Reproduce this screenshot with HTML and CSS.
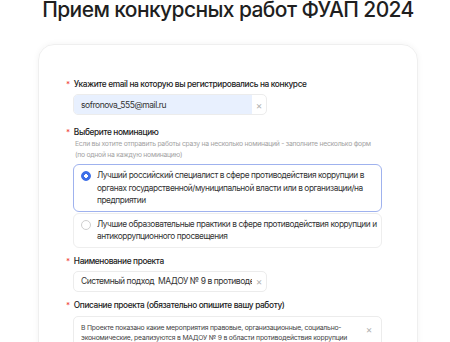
FILE: index.html
```html
<!DOCTYPE html>
<html lang="ru">
<head>
  <meta charset="UTF-8">
  <title>Прием конкурсных работ ФУАП 2024</title>
  <meta name="viewport" content="width=device-width, initial-scale=1.0" />
  <link rel="stylesheet" href="styles.css">
</head>
<body>

  <div class="page">
    <h1>Прием конкурсных работ ФУАП 2024</h1>

    <form class="form-card">

      <div class="field">
        <label class="label"><span class="req">*</span>Укажите email на которую вы регистрировались на конкурсе</label>
        <div class="input short">
          <span class="value autofill">sofronova_555@mail.ru</span>
          <span class="clear">&times;</span>
        </div>
      </div>

      <div class="field nominations">
        <label class="label"><span class="req">*</span>Выберите номинацию</label>
        <div class="hint">Если вы хотите отправить работы сразу на несколько номинаций - заполните несколько форм (по одной на каждую номинацию)</div>
        <div class="options">
          <div class="option checked">
            <span class="radio"></span>
            <span class="option-text">Лучший российский специалист в сфере противодействия коррупции в органах государственной/муниципальной власти или в организации/на предприятии</span>
          </div>
          <div class="option">
            <span class="radio"></span>
            <span class="option-text">Лучшие образовательные практики в сфере противодействия коррупции и антикоррупционного просвещения</span>
          </div>
        </div>
      </div>

      <div class="field tight">
        <label class="label"><span class="req">*</span>Наименование проекта</label>
        <div class="input short">
          <span class="value">Системный подход  МАДОУ № 9 в противоде</span>
          <span class="clear">&times;</span>
        </div>
      </div>

      <div class="field">
        <label class="label"><span class="req">*</span>Описание проекта (обязательно опишите вашу работу)</label>
        <div class="textarea">
          <span class="area-text">В Проекте показано какие мероприятия правовые, организационные, социально-экономические, реализуются в МАДОУ № 9 в области противодействия коррупции</span>
          <span class="clear">&times;</span>
        </div>
      </div>

    </form>
  </div>

</body>
</html>
```

FILE: styles.css
```css
body {
  margin: 0;
  background: #fff;
  color: #222;
  font-family: Inter, "Noto Sans", sans-serif;
}
.page {
  width: 380px;
  margin-left: 38px;
}
h1 {
  margin: 0;
  font-size: 21px;
  line-height: 20px;
  font-weight: 500;
  letter-spacing: -0.6px;
  text-align: center;
  color: #1f1f1f;
  white-space: nowrap;
}
.form-card {
  margin-top: 24px;
  border: 1px solid #efefef;
  border-radius: 16px;
  box-shadow: 0 0 6px rgba(0, 0, 0, 0.05);
  padding: 33px 35px 40px 34px;
  height: 400px;
}
.field {
  margin-bottom: 11px;
}
.field.nominations {
  margin-bottom: 7px;
}
.field.tight {
  margin-bottom: 7px;
}
.label {
  display: block;
  padding-left: 2px;
  font-size: 8.3px;
  line-height: 12px;
  font-weight: 500;
  letter-spacing: -0.35px;
  color: #222;
}
.req {
  color: #f0453a;
  margin-left: -9px;
  margin-right: 4px;
  font-size: 8px;
}
.hint {
  padding-left: 2px;
  font-size: 6.8px;
  line-height: 11px;
  letter-spacing: -0.25px;
  color: #a3a3a3;
}
.input {
  display: flex;
  align-items: center;
  margin-top: 4px;
  height: 19px;
  border: 1px solid #ececec;
  border-radius: 5px;
  overflow: hidden;
}
.short {
  width: 192px;
}
.value {
  flex: 1;
  min-width: 0;
  height: 100%;
  display: flex;
  align-items: center;
  padding-left: 7px;
  font-size: 8.5px;
  letter-spacing: -0.45px;
  color: #333;
  white-space: pre;
  overflow: hidden;
}
.autofill {
  background: #e8f0fe;
}
.clear {
  flex: none;
  width: 14px;
  text-align: center;
  font-size: 10px;
  color: #b0b0b0;
}
.options {
  margin-top: 4px;
  display: flex;
  flex-direction: column;
  gap: 1px;
}
.option {
  display: flex;
  gap: 6px;
  padding: 4px 3px 4px 7px;
  border: 1px solid #eeeeee;
  border-radius: 6px;
}
.option.checked {
  border-color: #9fb2ee;
}
.radio {
  flex: none;
  width: 8px;
  height: 8px;
  margin-top: 2px;
  border: 1px solid #cfcfcf;
  border-radius: 50%;
}
.checked .radio {
  border-color: #3e6fe8;
  background: radial-gradient(circle, #fff 0 1.6px, #3e6fe8 2px);
}
.option-text {
  font-size: 8.3px;
  line-height: 12.5px;
  letter-spacing: -0.42px;
  color: #333;
}
.textarea {
  display: flex;
  gap: 10px;
  margin-top: 5px;
  padding: 6px 5px 6px 7px;
  border: 1px solid #ececec;
  border-radius: 5px;
}
.area-text {
  flex: 1;
  font-size: 6.8px;
  line-height: 10px;
  letter-spacing: -0.2px;
  color: #444;
}
```
